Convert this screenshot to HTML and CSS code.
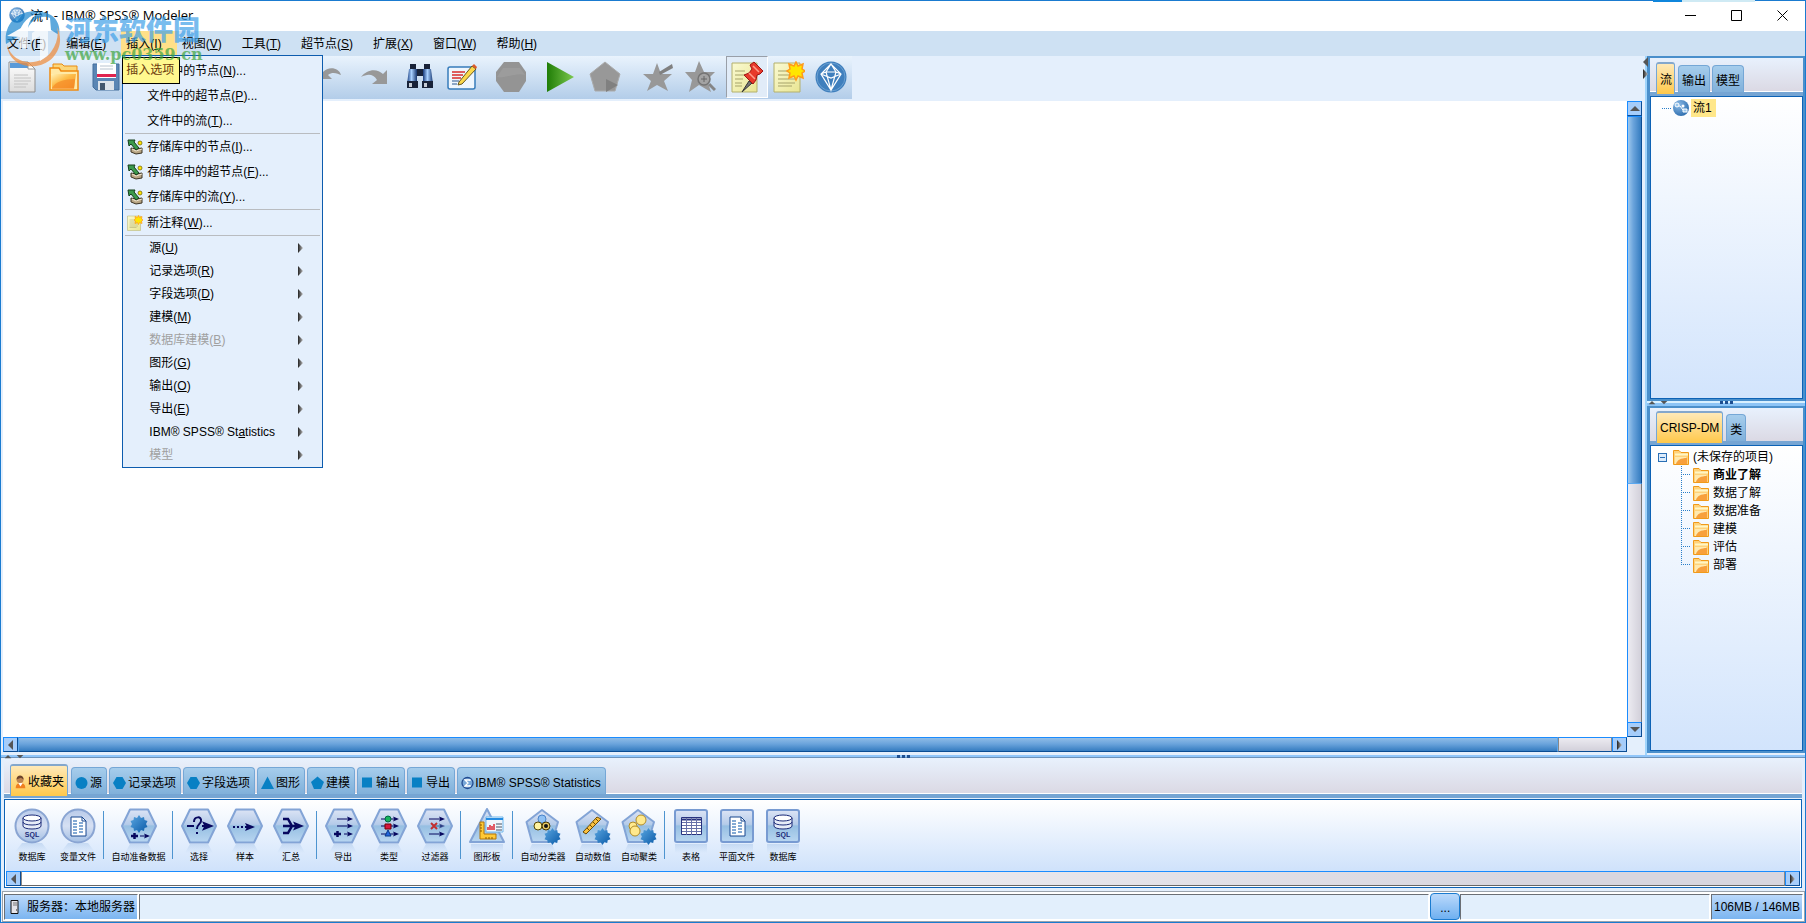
FILE: index.html
```
<!DOCTYPE html>
<html lang="zh-CN">
<head>
<meta charset="utf-8">
<title>流1 - IBM® SPSS® Modeler</title>
<link rel="stylesheet" href="styles.css">
</head>
<body>
<svg class="defs" aria-hidden="true">
  <defs>
    <linearGradient id="gShape" x1="0" y1="0" x2="0" y2="1"><stop offset="0" stop-color="#dce4f5"/><stop offset=".45" stop-color="#b5cbe9"/><stop offset=".5" stop-color="#96bfe2"/><stop offset="1" stop-color="#b9d6f1"/></linearGradient>
    <linearGradient id="gCircle" x1="0" y1="0" x2="0" y2="1"><stop offset="0" stop-color="#b9cbea"/><stop offset=".5" stop-color="#d6e0f3"/><stop offset="1" stop-color="#a3bfe3"/></linearGradient>
    <linearGradient id="gFade" x1="0" y1="0" x2="0" y2="1"><stop offset="0" stop-color="#a9c6ea" stop-opacity=".5"/><stop offset="1" stop-color="#a9c6ea" stop-opacity="0"/></linearGradient>
    <linearGradient id="gFolder" x1="0" y1="0" x2="1" y2="1"><stop offset="0" stop-color="#fff3b8"/><stop offset=".45" stop-color="#fdbd4a"/><stop offset="1" stop-color="#f68b1f"/></linearGradient>
    <linearGradient id="gGear" x1="0" y1="0" x2="1" y2="1"><stop offset="0" stop-color="#5aa6e0"/><stop offset="1" stop-color="#0a5aa8"/></linearGradient>
    <linearGradient id="gPlay" x1="0" y1="0" x2="1" y2="0"><stop offset="0" stop-color="#1f7d06"/><stop offset="1" stop-color="#7cc84f"/></linearGradient>
    <radialGradient id="gBall" cx=".35" cy=".3" r=".8"><stop offset="0" stop-color="#8dbbe6"/><stop offset="1" stop-color="#2668ab"/></radialGradient>
    <linearGradient id="gPaper" x1="0" y1="0" x2="1" y2="1"><stop offset="0" stop-color="#fafad2"/><stop offset="1" stop-color="#e9e592"/></linearGradient>
    <linearGradient id="gDoc" x1="0" y1="0" x2="0" y2="1"><stop offset="0" stop-color="#fff"/><stop offset="1" stop-color="#dcdcdc"/></linearGradient>
    <linearGradient id="gTube" x1="0" y1="0" x2="1" y2="0"><stop offset="0" stop-color="#173a7c"/><stop offset=".45" stop-color="#a8d0ff"/><stop offset="1" stop-color="#15356f"/></linearGradient>
    <linearGradient id="gArrow" x1="0" y1="0" x2="1" y2="0"><stop offset="0" stop-color="#222"/><stop offset="1" stop-color="#bbb"/></linearGradient>
  </defs>
  <symbol id="app" viewBox="0 0 32 32"><circle cx="16" cy="16" r="15.500" fill="url(#gBall)"/><path d="M10 6h12l5 7-11 15L5 13zM5 13l7-1h8l7 1M10 6l2 6 4-6 4 6 2-6M12 12l4 16 4-16M5 13l11 4 11-4" fill="none" stroke="#fff" stroke-width="1.300"/></symbol>
  <symbol id="diamond" viewBox="0 0 32 32"><circle cx="16" cy="16" r="15.500" fill="#3f7fbd"/><circle cx="16" cy="16" r="14" fill="none" stroke="#6ba0d1"/><path d="M16 3 6 13l10 16 10-16zM6 13l5-2h10l5 2M16 3l-5 8 5 18 5-18zM6 13l10 4 10-4" fill="none" stroke="#fff" stroke-width="1.200"/></symbol>
  <symbol id="folder" viewBox="0 0 32 30"><path d="M5 8V2h9l2 2h13v20H5z" fill="#fbd67a" stroke="#e98b13"/><path d="M2 11V6h9l2 3h17v19H2z" fill="#ffe9a6" stroke="#f08a10" stroke-width="1.500"/><path d="M3 12h25l-2 14H4z" fill="url(#gFolder)"/><path d="M4 26c3-6 12-9 23-9l-1 10H4z" fill="#f58a28" opacity=".7"/></symbol>
  <symbol id="smallfolder" viewBox="0 0 16 16"><path d="M.5 15.500V1.500H6l2 2h7.500v12z" fill="#ffd27a" stroke="#f09a1a"/><path d="M2 5.500h13" stroke="#fff6c4" stroke-width="2"/><path d="M2 15V8h11v7z" fill="#ffe9ae"/><path d="M3 15c1-4 5-6 11-6v6z" fill="#f8a03c"/></symbol>
  <symbol id="repo" viewBox="0 0 16 16"><path d="m4 9 5 1 6-1v5l-6 1-5-2z" fill="#b8a584" stroke="#3c3424"/><path d="m5 10 4 2 6-2" fill="none" stroke="#efe5cf"/><path d="M1 1h7L7 3l5 6-3 2-5-6-2 2z" fill="#3c9a4c" stroke="#143d1d"/><circle cx="13" cy="4" r="2" fill="#ffe400" stroke="#665b00" stroke-width=".7"/></symbol>
  <symbol id="notes" viewBox="0 0 32 32"><path d="M1 2h26v29H1z" fill="url(#gPaper)" stroke="#b3b06c"/><path d="M5 10h10M5 14h15M5 18h17M5 22h17M5 25h14" stroke="#a6a36b"/><path d="m23 1 2 4 5-2-1 5 3 2-3 2 1 5-5-2-2 4-2-4-5 2 1-5-3-2 3-2-1-5 5 2z" fill="#ffe600" stroke="#ff9b19" stroke-width="1.500"/></symbol>
  <symbol id="pin" viewBox="0 0 32 32"><path d="M1 2h25v29H1z" fill="url(#gPaper)" stroke="#b3b06c"/><path d="M4 10h10M4 14h10M4 18h8M4 22h7M4 25h7" stroke="#a6a36b"/><path d="m18 20-7 11 10-9z" fill="#777" stroke="#333"/><path d="m19 4 4-3 9 9-3 3-3 1-1 5-3 4-9-9 5-2 3-4z" fill="#e83a2a" stroke="#a01414"/><path d="m22 5 6 6M18 12l6 6" stroke="#ff9d8a" stroke-width="1.500"/></symbol>
  <symbol id="gear" viewBox="0 0 18 18"><path d="m9 0 2 3 3-1 .5 3 3 1-1.500 3 1.500 3-3 1-.5 3-3-1-2 3-2-3-3 1-.5-3-3-1L2 9 .5 6l3-1L4 2l3 1z" fill="url(#gGear)"/></symbol>
  <symbol id="circle" viewBox="0 0 36 46"><circle cx="18" cy="18" r="16.500" fill="url(#gCircle)" stroke="#8aa5d3" stroke-width="2"/><path d="M8 35h20l7 9H1z" fill="url(#gFade)"/></symbol>
  <symbol id="hex" viewBox="0 0 36 46"><path d="M9 1.500h18L35 18l-8 16.500H9L1 18z" fill="url(#gShape)" stroke="#83a4d6" stroke-width="2" stroke-linejoin="round"/><path d="M9 36h18l5 9H4z" fill="url(#gFade)"/></symbol>
  <symbol id="pent" viewBox="0 0 36 46"><path d="m17 2 16 12-6 20H7L1.500 14z" fill="url(#gShape)" stroke="#83a4d6" stroke-width="2" stroke-linejoin="round"/><path d="M7 36h20l4 9H3z" fill="url(#gFade)"/></symbol>
  <symbol id="square" viewBox="0 0 36 46"><rect x="2" y="2" width="32" height="32" rx="2" fill="url(#gShape)" stroke="#789bd2" stroke-width="2"/><path d="M2 36h32v9H2z" fill="url(#gFade)"/></symbol>
  <symbol id="sql" viewBox="0 0 36 46"><path d="M9 10v8c0 4 18 4 18 0v-8" fill="#e7ecf8" stroke="#1b2a78"/><path d="M9 14c0 4 18 4 18 0" fill="none" stroke="#1b2a78"/><ellipse cx="18" cy="10" rx="9" ry="3" fill="#fff" stroke="#1b2a78"/><text x="18" y="29" text-anchor="middle" class="svg-sql">SQL</text></symbol>
  <symbol id="sheet" viewBox="0 0 36 46"><path d="M11 9h11l4 4v15H11z" fill="#fff" stroke="#17468f"/><path d="M13 13h4M19 15h4M13 16h4M19 18h4M13 19h4M19 21h4M13 22h4M19 24h4M13 25h4" stroke="#5c8fc6" stroke-width="1.500"/><path d="M22 9v4h4" fill="none" stroke="#17468f"/></symbol>
  <symbol id="head" viewBox="0 0 10 8"><path d="m0 0 10 4-10 4 2-4z" fill="#07075e"/></symbol>
  <symbol id="right" viewBox="0 0 6 10"><path d="m0 0 5 5-5 5z" fill="url(#gArrow)"/></symbol>
  <symbol id="left" viewBox="0 0 6 10"><path d="M5 0 0 5l5 5z" fill="#555"/></symbol>
  <symbol id="up" viewBox="0 0 10 6"><path d="m0 5 5-5 5 5z" fill="#555"/></symbol>
  <symbol id="down" viewBox="0 0 10 6"><path d="m0 0 5 5 5-5z" fill="#555"/></symbol>
</svg>

<div class="window">
  <header class="titlebar">
    <svg class="i16"><use href="#app"/></svg>
    <h1 class="title">流1 - IBM® SPSS® Modeler</h1>
    <span class="notch"></span>
    <button class="winbtn" aria-label="最小化"><svg class="i11" viewBox="0 0 11 11"><path d="M0 5.500h11" stroke="#000"/></svg></button>
    <button class="winbtn" aria-label="最大化"><svg class="i11" viewBox="0 0 11 11"><path d="M.5.5h10v10H.5z" fill="none" stroke="#000"/></svg></button>
    <button class="winbtn" aria-label="关闭"><svg class="i11" viewBox="0 0 11 11"><path d="m.5.5 10 10m0-10-10 10" stroke="#000"/></svg></button>
  </header>

  <nav class="menubar">
    <button class="menu">文件(<u>F</u>)</button>
    <button class="menu">编辑(<u>E</u>)</button>
    <div class="menu-holder">
      <button class="menu open">插入(<u>I</u>)</button>
      <div class="popup">
        <button class="item">文件中的节点(<u>N</u>)...</button>
        <button class="item">文件中的超节点(<u>P</u>)...</button>
        <button class="item">文件中的流(<u>T</u>)...</button>
        <hr class="sep">
        <button class="item"><svg class="i16"><use href="#repo"/></svg>存储库中的节点(<u>I</u>)...</button>
        <button class="item"><svg class="i16"><use href="#repo"/></svg>存储库中的超节点(<u>F</u>)...</button>
        <button class="item"><svg class="i16"><use href="#repo"/></svg>存储库中的流(<u>Y</u>)...</button>
        <hr class="sep">
        <button class="item"><svg class="i16"><use href="#notes"/></svg>新注释(<u>W</u>)...</button>
        <hr class="sep">
        <button class="item sub"><span>源(<u>U</u>)</span><svg class="arrow"><use href="#right"/></svg></button>
        <button class="item sub"><span>记录选项(<u>R</u>)</span><svg class="arrow"><use href="#right"/></svg></button>
        <button class="item sub"><span>字段选项(<u>D</u>)</span><svg class="arrow"><use href="#right"/></svg></button>
        <button class="item sub"><span>建模(<u>M</u>)</span><svg class="arrow"><use href="#right"/></svg></button>
        <button class="item sub" disabled><span>数据库建模(<u>B</u>)</span><svg class="arrow"><use href="#right"/></svg></button>
        <button class="item sub"><span>图形(<u>G</u>)</span><svg class="arrow"><use href="#right"/></svg></button>
        <button class="item sub"><span>输出(<u>O</u>)</span><svg class="arrow"><use href="#right"/></svg></button>
        <button class="item sub"><span>导出(<u>E</u>)</span><svg class="arrow"><use href="#right"/></svg></button>
        <button class="item sub"><span>IBM® SPSS® St<u>a</u>tistics</span><svg class="arrow"><use href="#right"/></svg></button>
        <button class="item sub" disabled><span>模型</span><svg class="arrow"><use href="#right"/></svg></button>
      </div>
      <div class="tooltip" role="tooltip">插入选项</div>
    </div>
    <button class="menu">视图(<u>V</u>)</button>
    <button class="menu">工具(<u>T</u>)</button>
    <button class="menu">超节点(<u>S</u>)</button>
    <button class="menu">扩展(<u>X</u>)</button>
    <button class="menu">窗口(<u>W</u>)</button>
    <button class="menu">帮助(<u>H</u>)</button>
  </nav>

  <div class="workspace">
    <main class="main">
      <div class="toolbar">
        <div class="group first">
          <button class="tool" aria-label="新建"><svg class="i32" viewBox="0 0 32 32"><path d="M3 1h19l7 7v23H3z" fill="url(#gDoc)" stroke="#8d8d8d"/><path d="M4 2h17l3 5H4z" fill="#5a9ad8"/><path d="M22 1v7h7z" fill="#fff" stroke="#999"/><path d="M8 14h14M8 17h17M8 20h17M8 23h14M8 26h12" stroke="#c2c2c2"/></svg></button>
          <button class="tool" aria-label="打开"><svg class="i32"><use href="#folder"/></svg></button>
          <button class="tool" aria-label="保存"><svg class="i32" viewBox="0 0 32 32"><path d="M3 3h26v26H6l-3-3z" fill="#5b86b4" stroke="#456f9c"/><path d="M7 2h19v15H7z" fill="#fff"/><path d="M7 13h19v3H7z" fill="#e0244f"/><path d="M10 5h13M10 8h13" stroke="#b9c4d0"/><path d="M8 20h16v9H8z" fill="#dde3ea"/><path d="M10 22h5v7h-5z" fill="#43566c"/></svg></button>
        </div>
        <div class="group">
          <button class="tool" disabled aria-label="撤销"><svg class="i32" viewBox="0 0 32 32"><path d="M3 18h12l-4-4c5-4 10-1 13 0-2-8-13-9-18-3L3 8z" fill="#989898"/></svg></button>
          <button class="tool" disabled aria-label="重做"><svg class="i32" viewBox="0 0 32 32"><path d="M28 9v14H13l5-4c-4-7-10-6-16-3 6-8 16-9 22-3z" fill="#989898"/></svg></button>
        </div>
        <div class="group">
          <button class="tool" aria-label="查找"><svg class="i32" viewBox="0 0 32 32"><path d="M13 8h6v7h-6z" fill="#18243d"/><path d="M5 8h8v15H3z" fill="url(#gTube)"/><path d="M19 8h8l2 15H19z" fill="url(#gTube)"/><path d="M6 3h6v5H6zM20 3h6v5h-6zM3 20h11v7H3zM18 20h11v7H18z" fill="#182238"/><path d="M5 22h3v4H5zM20 22h3v4h-3z" fill="#c6ccd5"/></svg></button>
          <button class="tool" aria-label="编辑流"><svg class="i32" viewBox="0 0 32 32"><rect x="2" y="6" width="27" height="22" rx="2" fill="#eff6fd" stroke="#377cba" stroke-width="1.500"/><path d="M6 11h13M6 14h11M6 17h9" stroke="#d92b2b" stroke-width="1.300"/><path d="M6 20h7M6 23h5" stroke="#29578f"/><path d="M13 21 26 5l4 3-14 15-4 1z" fill="#fbd84b" stroke="#665522"/><path d="m26 5 2-2 3 3-1 2z" fill="#dd5b2b"/></svg></button>
        </div>
        <div class="group"><button class="tool" disabled aria-label="停止"><svg class="i32" viewBox="0 0 32 32"><path d="M9 1h15l7 10v9l-7 11H9L1 20v-9z" fill="#949494"/><path d="M8 7h17l5 7c-9-3-20 4-28 2z" fill="#a2a2a2" opacity=".6"/></svg></button></div>
        <div class="group"><button class="tool" aria-label="运行"><svg class="i32" viewBox="0 0 32 32"><path d="m3 1 27 15L3 31z" fill="url(#gPlay)"/></svg></button></div>
        <div class="group near"><button class="tool" disabled aria-label="运行选中项"><svg class="i32" viewBox="0 0 32 32"><path d="m16 1 15 12-5 17H6L1 13z" fill="#989898" stroke="#aaa"/><path d="m17 18 12 6-12 7z" fill="#808080"/></svg></button></div>
        <div class="group stars">
          <button class="tool" disabled aria-label="添加到收藏夹"><svg class="i32" viewBox="0 0 32 32"><path d="m15 2 4 11h11l-8 7 4 10-11-6-10 6 4-10-8-7h10z" fill="#989898"/><path d="m17 11 13-8 1 4-13 7z" fill="#808080"/></svg></button>
          <button class="tool" disabled aria-label="查看收藏"><svg class="i32" viewBox="0 0 32 32"><path d="m15 0 5 11h11l-8 8 4 12-12-7-10 7 3-12-7-8h10z" fill="#989898"/><circle cx="20" cy="18" r="6" fill="#a3a3a3" stroke="#747474" stroke-width="1.500"/><path d="M17 18h6M20 15v6" stroke="#666"/><path d="m25 23 6 6" stroke="#858585" stroke-width="3"/></svg></button>
        </div>
        <div class="group">
          <button class="tool pressed" aria-label="显示注释"><svg class="i32"><use href="#pin"/></svg></button>
          <button class="tool" aria-label="新注释"><svg class="i32"><use href="#notes"/></svg></button>
          <button class="tool" aria-label="SPSS Modeler"><svg class="i32"><use href="#diamond"/></svg></button>
        </div>
      </div>
      <div class="canvas-row">
        <div class="canvas"></div>
        <div class="vscroll">
          <button class="sbtn" aria-label="向上"><svg class="tri-v"><use href="#up"/></svg></button>
          <span class="vthumb"></span><span class="vtrack"></span>
          <button class="sbtn" aria-label="向下"><svg class="tri-v"><use href="#down"/></svg></button>
        </div>
      </div>
      <div class="hscroll">
        <button class="sbtn" aria-label="向左"><svg class="tri-h"><use href="#left"/></svg></button>
        <span class="hthumb"></span><span class="htrack"></span>
        <button class="sbtn" aria-label="向右"><svg class="tri-h"><use href="#right"/></svg></button>
      </div>
    </main>

    <aside class="side">
      <div class="collapse-side"><svg class="tri-h"><use href="#left"/></svg><svg class="tri-h"><use href="#right"/></svg></div>
      <section class="panel upper">
        <div class="tabs">
          <button class="tab active">流</button><button class="tab">输出</button><button class="tab">模型</button>
        </div>
        <div class="box">
          <div class="tree-row stream"><span class="dots"></span><svg class="i16" viewBox="0 0 16 16"><circle cx="8" cy="8" r="8" fill="url(#gBall)"/><path d="M4 6h3l3 4h3" fill="none" stroke="#fff"/><circle cx="4" cy="5" r="2" fill="#9cc8ec" stroke="#fff"/><circle cx="10" cy="6" r="1.500" fill="#fff"/><path d="M10 9h4v3h-4z" fill="#9cc8ec" stroke="#fff"/></svg><span class="selected">流1</span></div>
        </div>
      </section>
      <div class="side-split"><svg class="tri-v"><use href="#up"/></svg><svg class="tri-v"><use href="#down"/></svg><span class="grip"></span></div>
      <section class="panel lower">
        <div class="tabs">
          <button class="tab active">CRISP-DM</button><button class="tab">类</button>
        </div>
        <div class="box">
          <div class="tree-row root"><span class="minus"></span><svg class="i16"><use href="#smallfolder"/></svg><span>(未保存的项目)</span></div>
          <ul class="branch">
            <li class="tree-row"><svg class="i16"><use href="#smallfolder"/></svg><b>商业了解</b></li>
            <li class="tree-row"><svg class="i16"><use href="#smallfolder"/></svg><span>数据了解</span></li>
            <li class="tree-row"><svg class="i16"><use href="#smallfolder"/></svg><span>数据准备</span></li>
            <li class="tree-row"><svg class="i16"><use href="#smallfolder"/></svg><span>建模</span></li>
            <li class="tree-row"><svg class="i16"><use href="#smallfolder"/></svg><span>评估</span></li>
            <li class="tree-row"><svg class="i16"><use href="#smallfolder"/></svg><span>部署</span></li>
          </ul>
        </div>
      </section>
    </aside>
  </div>

  <div class="bottom-split"><svg class="tri-v"><use href="#up"/></svg><svg class="tri-v"><use href="#down"/></svg><span class="grip"></span></div>

  <section class="palette">
    <div class="tabs">
      <button class="tab active"><svg class="i13" viewBox="0 0 13 16"><path d="M1 15c0-5 3-6 5.500-6S12 10 12 15z" fill="#f08020"/><path d="m4 9 2.500 4L9 9z" fill="#fff"/><circle cx="6" cy="5" r="4" fill="#bd8452"/><path d="M2 5c0-6 8-6 8 0L7 3z" fill="#6b432c"/></svg>收藏夹</button>
      <button class="tab"><svg class="i13" viewBox="0 0 13 13"><circle cx="6.500" cy="6.500" r="6" fill="#0880c4"/></svg>源</button>
      <button class="tab"><svg class="i13" viewBox="0 0 13 13"><path d="M3.500.5h6l3.500 6-3.500 6h-6L0 6.500z" fill="#0880c4"/></svg>记录选项</button>
      <button class="tab"><svg class="i13" viewBox="0 0 13 13"><path d="M3.500.5h6l3.500 6-3.500 6h-6L0 6.500z" fill="#0880c4"/></svg>字段选项</button>
      <button class="tab"><svg class="i13" viewBox="0 0 13 13"><path d="m6.500 0 6.500 12.500H0z" fill="#0880c4"/></svg>图形</button>
      <button class="tab"><svg class="i13" viewBox="0 0 13 13"><path d="M6.500 0 13 5.500l-3 7H3l-3-7z" fill="#0880c4"/></svg>建模</button>
      <button class="tab"><svg class="i13" viewBox="0 0 13 13"><path d="M1 1h10v10H1z" fill="#0880c4"/></svg>输出</button>
      <button class="tab"><svg class="i13" viewBox="0 0 13 13"><path d="M1 1h10v10H1z" fill="#0880c4"/></svg>导出</button>
      <button class="tab"><svg class="i13" viewBox="0 0 13 13"><circle cx="6.500" cy="6.500" r="5.500" fill="#79a8d8" stroke="#234b90" stroke-width="1.300"/><path d="M9 4.500V3.500H4l3 3-3 3h5V8.500" fill="none" stroke="#fff" stroke-width="1.300"/></svg>IBM® SPSS® Statistics</button>
    </div>
    <div class="palette-box">
      <div class="nodes">
        <button class="node"><svg class="shape" viewBox="0 0 36 46"><use href="#circle"/><use href="#sql"/></svg>数据库</button>
        <button class="node"><svg class="shape" viewBox="0 0 36 46"><use href="#circle"/><use href="#sheet"/></svg>变量文件</button>
        <span class="bar"></span>
        <button class="node wide"><svg class="shape" viewBox="0 0 36 46"><use href="#hex"/><use href="#gear" x="9" y="7" width="18" height="18"/><path d="M10 28h7M13.500 25v6" stroke="#07075e" stroke-width="2.500"/><path d="M19 28h6" stroke="#07075e"/><use href="#head" x="23" y="25" width="6" height="6"/></svg>自动准备数据</button>
        <span class="bar"></span>
        <button class="node"><svg class="shape" viewBox="0 0 36 46"><use href="#hex"/><path d="M6 18h7M21 18h6M13 14c0-6 8-6 7-1 0 3-4 3-4 8M16 24v2" fill="none" stroke="#07075e" stroke-width="2"/><use href="#head" x="21" y="13" width="12" height="10"/></svg>选择</button>
        <button class="node"><svg class="shape" viewBox="0 0 36 46"><use href="#hex"/><path d="M6 19h2M10 19h2M14 19h2M18 19h6" stroke="#07075e" stroke-width="2"/><use href="#head" x="18" y="14" width="10" height="10"/></svg>样本</button>
        <button class="node"><svg class="shape" viewBox="0 0 36 46"><use href="#hex"/><path d="M10 11h5l4 7h5M10 25h5l4-7h-9" fill="none" stroke="#07075e" stroke-width="2.500"/><use href="#head" x="20" y="12" width="11" height="12"/></svg>汇总</button>
        <span class="bar"></span>
        <button class="node"><svg class="shape" viewBox="0 0 36 46"><use href="#hex"/><path d="M12 11h12M12 18h12M19 26h6" stroke="#07075e"/><path d="M9 26h7M12.500 23v6" stroke="#07075e" stroke-width="2.500"/><use href="#head" x="22" y="8" width="6" height="6"/><use href="#head" x="22" y="15" width="6" height="6"/><use href="#head" x="22" y="23" width="6" height="6"/></svg>导出</button>
        <button class="node"><svg class="shape" viewBox="0 0 36 46"><use href="#hex"/><path d="M10 11h14M10 18h14M10 26h14" stroke="#07075e"/><circle cx="17" cy="11" r="3" fill="#18b45b" stroke="#064"/><path d="M14 16h6v5h-6z" fill="#d5173e" stroke="#700"/><path d="m17 22 3 6h-6z" fill="#2466dc" stroke="#03368a"/><use href="#head" x="22" y="8" width="6" height="6"/><use href="#head" x="22" y="15" width="6" height="6"/><use href="#head" x="22" y="23" width="6" height="6"/></svg>类型</button>
        <button class="node"><svg class="shape" viewBox="0 0 36 46"><use href="#hex"/><path d="M12 11h12M12 26h12" stroke="#07075e"/><path d="M19 18h6" stroke="#2274a3"/><path d="m14 15 6 6m0-6-6 6" stroke="#c03030" stroke-width="2"/><use href="#head" x="22" y="8" width="6" height="6"/><use href="#head" x="22" y="15" width="6" height="6" opacity=".6"/><use href="#head" x="22" y="23" width="6" height="6"/></svg>过滤器</button>
        <span class="bar"></span>
        <button class="node"><svg class="shape" viewBox="0 0 36 46"><path d="m18 1 17 33H1z" fill="url(#gShape)" stroke="#83a4d6" stroke-width="2" stroke-linejoin="round"/><path d="M2 36h32v8H2z" fill="url(#gFade)"/><path d="M11 14h4v12h12v5H11z" fill="#ffc936" stroke="#b47708"/><path d="M11 17h2M11 20h2M11 23h2M17 31v-2M20 31v-2M23 31v-2" stroke="#8a5b00"/><path d="M17 9h17v15H17z" fill="#f0f5fb" stroke="#6fb7ec"/><path d="M17 11h17" stroke="#258ce2" stroke-width="2"/><path d="M19 22v-3M21 22v-5M23 22v-4M25 22v-6" stroke="#dc2936" stroke-width="1.500"/><path d="M27 16h6M27 19h6M27 22h6" stroke="#456"/></svg>图形板</button>
        <span class="bar"></span>
        <button class="node auto"><svg class="shape" viewBox="0 0 36 46"><use href="#pent"/><circle cx="17" cy="11" r="4" fill="#8fc1f4" stroke="#4a83c9"/><circle cx="13" cy="18" r="4" fill="#fff3a0" stroke="#554400"/><circle cx="21" cy="18" r="4" fill="#e8c965" stroke="#443300"/><circle cx="21" cy="18" r="2" fill="#111"/><use href="#gear" x="19" y="20" width="17" height="17"/></svg>自动分类器</button>
        <button class="node"><svg class="shape" viewBox="0 0 36 46"><use href="#pent"/><path d="m8 24 14-15 4 2-15 15z" fill="#fbc23e" stroke="#6b4a06"/><path d="m12 20 2 2m1-5 2 2m1-5 2 2m1-5 2 2" stroke="#6b4a06"/><use href="#gear" x="19" y="20" width="17" height="17"/></svg>自动数值</button>
        <button class="node"><svg class="shape" viewBox="0 0 36 46"><use href="#pent"/><circle cx="20" cy="12" r="5" fill="#ffe98d" stroke="#b08c28"/><circle cx="12" cy="18" r="4" fill="#ffe98d" stroke="#b08c28"/><circle cx="14" cy="23" r="5" fill="#ffe98d" stroke="#b08c28"/><use href="#gear" x="19" y="20" width="17" height="17"/></svg>自动聚类</button>
        <span class="bar"></span>
        <button class="node"><svg class="shape" viewBox="0 0 36 46"><use href="#square"/><path d="M8.500 9.500h20v17h-20z" fill="#fff" stroke="#27327e"/><path d="M8 11.500h21" stroke="#27327e" stroke-width="2"/><path d="M9 14.500h19M9 17.500h19M9 20.500h19M9 23.500h19M13.500 10v17M18.500 10v17M23.500 10v17" stroke="#6670a8"/></svg>表格</button>
        <button class="node"><svg class="shape" viewBox="0 0 36 46"><use href="#square"/><use href="#sheet"/></svg>平面文件</button>
        <button class="node"><svg class="shape" viewBox="0 0 36 46"><use href="#square"/><use href="#sql"/></svg>数据库</button>
      </div>
      <div class="hscroll idle">
        <button class="sbtn" aria-label="向左"><svg class="tri-h"><use href="#left"/></svg></button>
        <span class="empty"></span>
        <button class="sbtn" aria-label="向右"><svg class="tri-h"><use href="#right"/></svg></button>
      </div>
    </div>
  </section>

  <footer class="status">
    <div class="cell server"><svg class="i16" viewBox="0 0 16 16"><path d="M4 1.500h7v13H4z" fill="#e5e5ea" stroke="#111"/><path d="M6 4h4M6 6h4" stroke="#777"/><path d="M9 11h1" stroke="#222"/></svg>服务器：本地服务器</div>
    <div class="cell message"></div>
    <button class="more">...</button>
    <div class="cell progress"></div>
    <div class="cell memory">106MB / 146MB</div>
  </footer>

  <div class="watermark" aria-hidden="true">
    <svg class="wm-logo" viewBox="0 0 60 60"><path d="M2 35C-1 12 18-1 38 3 26 5 16 14 15 27L7 32z" fill="#1b86cf"/><path d="M38 3c15 2 19 15 17 23l-8-5-1-12c-8-4-19 2-22 10C25 11 30 6 38 3z" fill="#1b86cf"/><path d="M3 36c6 20 32 23 44 7 6-8 8-18 6-25 9 18-3 37-21 39C15 59 4 49 3 36z" fill="#f08a38"/><path d="m3 27 21-12v24h-8V28zM28 24l16-11v33l-8 6V27l-8 5z" fill="#fff"/></svg>
    <div class="wm-text"><span class="wm-name">河东软件园</span><span class="wm-url">www.pc0359.cn</span></div>
  </div>
</div>
</body>
</html>
```
FILE: styles.css
```
* { box-sizing: border-box; }
body {
  margin: 0;
  color: #000;
  font: 12px/16px "Liberation Sans", "Noto Sans CJK SC", sans-serif;
}
button {
  margin: 0;
  padding: 0;
  border: 0;
  background: none;
  color: inherit;
  font: inherit;
}
svg { display: block; flex: none; }
.defs { position: absolute; width: 0; height: 0; }
.i11 { width: 11px; height: 11px; }
.i13 { width: 13px; height: 14px; }
.i16 { width: 16px; height: 16px; }
.i32 { width: 32px; height: 32px; }
.tri-v { width: 10px; height: 6px; }
.tri-h { width: 6px; height: 10px; }
.svg-sql { font: bold 7px "Liberation Sans", sans-serif; fill: #1b2a78; }

.window {
  position: relative;
  display: flex;
  flex-direction: column;
  height: 100vh;
  border: 1px solid #1a7bd0;
  background: #e4effc;
}

/* Title bar */
.titlebar {
  position: relative;
  display: flex;
  align-items: center;
  height: 30px;
  padding: 0 0 2px 8px;
  background: #fff;
}
.title {
  flex: 1;
  margin: 0;
  padding-left: 5px;
  font: 13px/18px "Open Sans", "Noto Sans CJK SC", sans-serif;
}
.notch {
  position: absolute;
  top: -1px;
  right: 50px;
  width: 102px;
  height: 2px;
  background: linear-gradient(90deg, #0f86dc 28%, #cfeaf4 28%);
}
.winbtn { display: grid; place-items: center; width: 46px; height: 28px; }

/* Menus */
.menubar { display: flex; height: 25px; padding-left: 1px; background: #cee1f3; }
.menu-holder { position: relative; display: flex; }
.menu { height: 25px; padding: 0 15px 0 5px; white-space: nowrap; }
.menu.open { background: #ffe089; }
.popup {
  position: absolute;
  z-index: 5;
  top: 24px;
  left: 1px;
  width: 201px;
  padding: 2px 1px 1px;
  border: 1px solid #0d5cae;
  background: #e4effc;
}
.item {
  display: flex;
  align-items: center;
  width: 100%;
  height: 25px;
  padding-left: 23px;
  text-align: left;
  white-space: pre;
}
.item:has(.i16) { padding-left: 3px; }
.item .i16 { margin-right: 4px; }
.item.sub { justify-content: space-between; height: 23px; padding: 0 17px 0 25px; }
.item:disabled span { color: #a0a0a0; }
.arrow { width: 6px; height: 10px; }
.sep { height: 1px; margin: 0 1px; border: 0; background: #b9bcc0; }
.tooltip {
  position: absolute;
  z-index: 6;
  top: 26px;
  left: 1px;
  width: 58px;
  padding: 4px 3px 5px;
  border: 1px solid #000;
  background: #fff88f;
  color: #6b3a0c;
  white-space: nowrap;
}

/* Work area */
.workspace { display: flex; flex: 1; min-height: 0; }
.main { display: flex; flex: 1; flex-direction: column; min-width: 0; padding: 0 3px 3px 0; }
.toolbar {
  display: flex;
  align-self: flex-start;
  height: 43px;
  margin-bottom: 2px;
  background: linear-gradient(#e9f3fd, #b3cde9);
}
.group { display: flex; margin-left: 7px; }
.group:first-child { margin-left: 0; }
.group.first { margin-right: 178px; }
.group:nth-child(3), .group.near { margin-left: 3px; }
.group.stars { margin: 0 -2px 0 11px; }
.tool { display: grid; place-items: center; width: 42px; height: 42px; }
.tool.pressed { border: 1px solid; border-color: #999fa8 #fff #fff #999fa8; background: #e1ecf8; }
.canvas-row { display: flex; flex: 1; min-height: 0; margin-left: 2px; }
.canvas { flex: 1; background: #fff; }
.vscroll { display: flex; flex-direction: column; width: 15px; }
.sbtn {
  display: grid;
  flex: none;
  place-items: center;
  width: 15px;
  height: 15px;
  border: 1px solid;
  border-color: #1a8cff #0b4d94 #0b4d94 #1a8cff;
  background: #a6cdfa;
}
.vthumb {
  flex: 368;
  border: 1px solid;
  border-color: #1a8cff #0b4d94 #5aa8f0 #1a8cff;
  background: linear-gradient(90deg, #9fc8ec, #6ba4dc 40%, #357cc0);
}
.vtrack {
  flex: 240;
  border: 1px solid #1a8cff;
  border-width: 0 1px;
  border-right-color: #777;
  background: linear-gradient(90deg, #ecebf1, #d2d0da);
}
.hscroll { display: flex; height: 15px; margin: 0 15px 0 2px; }
.hthumb {
  flex: 1543;
  border: 1px solid;
  border-color: #1a8cff #5aa8f0 #0b4d94;
  background: linear-gradient(#8fbce6, #6ba4dc 45%, #357cc0);
}
.htrack {
  flex: 52;
  border: 1px solid;
  border-color: #1a8cff #888 #0b4d94;
  background: linear-gradient(#ecebf1, #d2d0da);
}

/* Side panels */
.side {
  position: relative;
  display: flex;
  flex-direction: column;
  width: 160px;
  padding-bottom: 2px;
  border-left: 2px solid #9fd4fb;
}
.collapse-side {
  position: absolute;
  top: 1px;
  left: -4px;
  display: flex;
  flex-direction: column;
  gap: 2px;
}
.panel {
  display: flex;
  flex-direction: column;
  min-height: 0;
  border: 2px solid #4a8fcb;
  border-left-width: 3px;
}
.upper { flex: 345; }
.lower { flex: 347; }
.tabs {
  display: flex;
  flex: none;
  align-items: flex-end;
  gap: 2px;
  height: 38px;
  padding-left: 6px;
  border-bottom: 4px solid #76a5d3;
  background: linear-gradient(#e8f1fd, #dbd9e4 33px, #fff 33px);
}
.tab {
  display: flex;
  align-items: center;
  height: 27px;
  padding: 4px 3px 0;
  border: 1px solid #75a7d6;
  border-bottom: 0;
  border-radius: 4px 4px 0 0;
  background: linear-gradient(#a6cdec, #80b0da);
  white-space: nowrap;
}
.tab.active {
  height: 32px;
  margin-bottom: -2px;
  padding-top: 2px;
  border-top: 2px solid #84a7cc;
  border-radius: 3px 3px 0 0;
  background: linear-gradient(#ffe9b8, #ffc84a);
}
.box {
  flex: 1;
  min-height: 0;
  border: 1px solid #0d62b5;
  background: linear-gradient(#fff, #d2e4fc);
}
.upper .tab.active { width: 19px; }
.upper .tab:not(.active) { margin-left: 1px; }
.upper .tab:last-child { margin-left: 0; }
.lower .tabs { height: 37px; }
.lower .tab { margin-right: 1px; }
.lower .tab.active { padding-top: 0; }
.tree-row { display: flex; align-items: center; height: 18px; white-space: nowrap; }
.stream { margin: 2px 0 0 11px; }
.dots { width: 9px; margin-right: 2px; border-top: 1px dotted #2a7fc9; }
.selected { margin-left: 2px; padding: 1px 4px 1px 2px; background: #ffe78a; }
.root { gap: 4px; margin: 2px 0 0 7px; }
.minus {
  width: 9px;
  height: 9px;
  margin-right: 2px;
  border: 1px solid #2a6fb5;
  background: linear-gradient(#2a6fb5, #2a6fb5) center / 5px 1px no-repeat #dcebfb;
}
.branch { margin: 0 0 0 30px; padding: 0; list-style: none; }
.branch .tree-row {
  gap: 4px;
  padding-left: 12px;
  background:
    repeating-linear-gradient(90deg, #2a7fc9 0 1px, transparent 1px 2px) 2px 8px / 8px 1px no-repeat,
    repeating-linear-gradient(#2a7fc9 0 1px, transparent 1px 2px) 0 0 / 1px 18px no-repeat;
}
.branch .tree-row:last-child {
  background:
    repeating-linear-gradient(90deg, #2a7fc9 0 1px, transparent 1px 2px) 2px 8px / 8px 1px no-repeat,
    repeating-linear-gradient(#2a7fc9 0 1px, transparent 1px 2px) 0 0 / 1px 9px no-repeat;
}
.side-split, .bottom-split { position: relative; display: flex; flex: none; gap: 2px; }
.side-split { height: 5px; background: linear-gradient(#d8f0ff 40%, #8cc4f6 40%); }
.bottom-split { height: 3px; padding-left: 2px; border-bottom: 1px solid #6d93bb; background: #91c6fa; }
.side-split .tri-v, .bottom-split .tri-v { height: 4px; }
.grip {
  position: absolute;
  top: 0;
  left: 50%;
  width: 13px;
  height: 3px;
  margin-left: -6px;
  background: repeating-linear-gradient(90deg, #1e4f91 0 3px, transparent 3px 5px);
}

/* Node palette */
.palette { padding: 0 3px 3px; }
.palette .tabs { height: 40px; margin-bottom: 1px; background: linear-gradient(#e8f1fd, #dbd9e4 35px, #fff 35px); }
.palette .tab { gap: 2px; padding-right: 4px; }
.palette .tab.active { gap: 1px; padding: 2px 3px 0; margin-right: 1px; }
.palette .tab:last-child { gap: 1px; }
.palette-box {
  padding: 0 1px 1px;
  border: 1px solid #0d62b5;
  background: #fff;
}
.nodes {
  display: flex;
  height: 71px;
  padding: 8px 0 0 3px;
  background: linear-gradient(#fff, #cfe2fb);
}
.node {
  display: flex;
  flex: none;
  flex-direction: column;
  align-items: center;
  width: 46px;
  height: 60px;
  font-size: 9px;
  line-height: 12px;
  white-space: nowrap;
}
.node.wide { width: 63px; }
.node.auto { width: 54px; }
.shape { width: 36px; height: 46px; margin-bottom: -3px; }
.bar { flex: none; width: 1px; height: 48px; margin: 3px 3px 0 2px; background: #4d94d0; }
.idle { margin: 0; }
.empty {
  flex: 1;
  border: 1px solid;
  border-color: #1a8cff #888 #666;
  background: linear-gradient(90deg, #fff 15%, #d8d6df 85%);
}

/* Status bar */
.status {
  display: flex;
  height: 31px;
  margin: 0 0 0 1px;
  padding: 2px 1px 1px;
  border: 1px solid #9aa3ad;
  background: #fff;
}
.cell {
  display: flex;
  align-items: center;
  margin-right: 1px;
  border: 1px solid;
  border-color: #6b6f75 #fff #fff #6b6f75;
  background: #e2effc;
  white-space: nowrap;
}
.server { gap: 4px; padding: 0 2px; background: linear-gradient(#bbd9fb, #7bb5f0); }
.message { flex: 1290; }
.progress { flex: 248; }
.memory { margin-right: 0; padding: 0 2px; background: linear-gradient(#bbd9fb, #7bb5f0); }
.more {
  width: 30px;
  margin-top: -1px;
  padding-top: 2px;
  border: 1px solid #1a7bd0;
  border-radius: 4px;
  background: linear-gradient(#bbd9fb, #6fb0f0);
}

/* Watermark laid over the window */
.watermark {
  position: absolute;
  z-index: 9;
  top: 8px;
  left: 3px;
  display: flex;
  opacity: .7;
  pointer-events: none;
}
.wm-logo { width: 60px; height: 60px; }
.wm-text { display: flex; flex-direction: column; margin-left: 1px; white-space: nowrap; }
.wm-name { margin-top: 4px; color: #3fa0e8; font: 900 27px/32px "Noto Sans CJK SC", sans-serif; }
.wm-url { color: #3fa53f; font: bold 16px/20px "DejaVu Serif", serif; }
```
